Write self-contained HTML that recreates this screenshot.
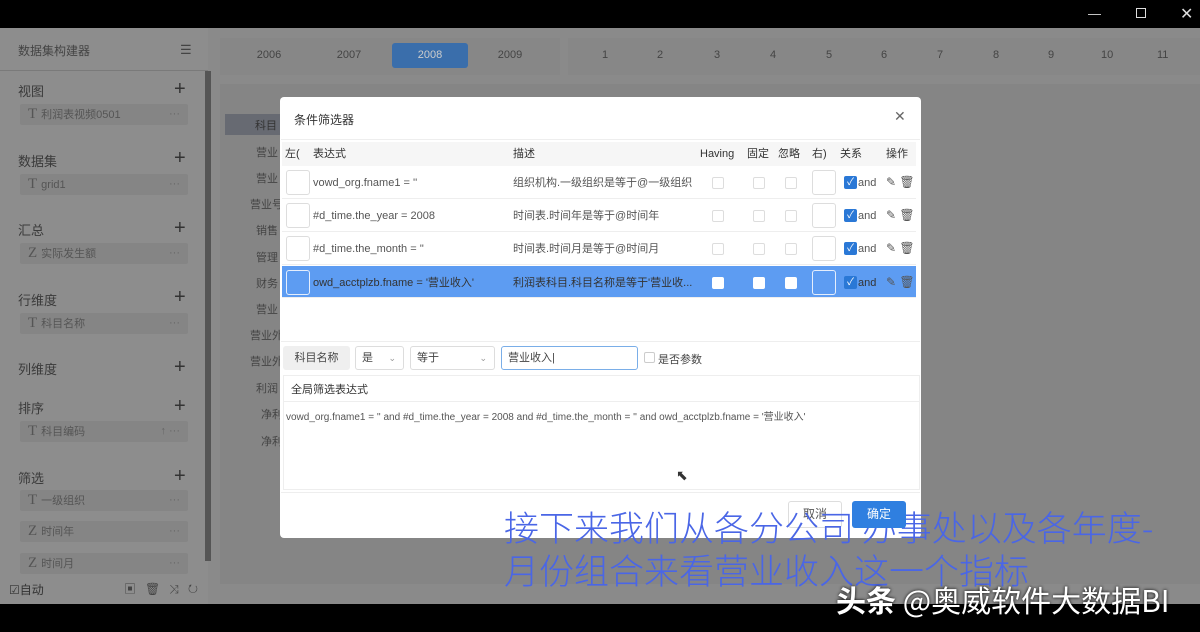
<!DOCTYPE html>
<html><head><meta charset="utf-8"><style>
*{margin:0;padding:0;box-sizing:border-box}
body{width:1200px;height:632px;overflow:hidden;background:#8a8a8a;font-family:"Liberation Sans","Noto Sans CJK SC",sans-serif;position:relative;color:#333}
.a{position:absolute}
.sec{position:absolute;left:18px;font-size:13px;color:#3a3a3a}
.plus{position:absolute;left:174px;font-size:20px;color:#333;line-height:1}
.item{position:absolute;left:20px;width:168px;height:21px;background:#858585;border-radius:2px;font-size:11px;color:#555;line-height:21px;padding-left:8px}
.item b{font-family:"Liberation Serif",serif;font-size:15px;color:#555;margin-right:4px;font-weight:normal}
.item i{position:absolute;right:8px;font-style:normal;color:#666}
.yr{position:absolute;top:43px;width:76px;height:25px;line-height:25px;text-align:center;font-size:11px;color:#444}
.mo{position:absolute;top:43px;height:25px;line-height:25px;font-size:11px;color:#444}
.th{position:absolute;top:146px;font-size:11px;color:#333;line-height:16px}
.row{position:absolute;left:282px;width:634px;height:33px;border-bottom:1px solid #eee;font-size:11px;color:#555}
.row .bx{position:absolute;top:4px;width:24px;height:25px;border:1px solid #ddd;border-radius:3px;background:#fff}
.row .cb{position:absolute;top:11px;width:12px;height:12px;border:1px solid #ddd;border-radius:2px;background:#fff}
.row .t{position:absolute;top:9px;line-height:16px}
.row .ck{position:absolute;left:562px;top:10px;width:13px;height:13px;background:#2a78d6;border-radius:2px;color:#fff;font-size:10px;line-height:13px;text-align:center}
.row .and{position:absolute;left:576px;top:9px;line-height:16px}
.row .ops{position:absolute;left:604px;top:8px;font-size:12px;color:#555;line-height:16px}
.sel{background:#5d9cf2;color:#333}
.sel .bx{background:#5d9cf2;border-color:#e5eefc}
.sel .cb{border-color:#fff}
.sub{position:absolute;left:504px;font-size:35px;font-weight:300;color:#4a66e6;font-family:"Noto Sans CJK SC",sans-serif;white-space:nowrap;line-height:42px;z-index:5}
.cl{position:absolute;font-size:11px;color:#444}
</style></head><body>
<div class="a" style="left:0;top:0;width:1200px;height:28px;background:#000"></div>
<div class="a" style="left:1088px;top:6px;color:#ddd;font-size:13px">—</div>
<div class="a" style="left:1136px;top:8px;width:10px;height:10px;border:1px solid #ddd"></div>
<div class="a" style="left:1180px;top:4px;color:#ddd;font-size:16px">✕</div>

<div class="a" style="left:0;top:28px;width:208px;height:576px;background:#8d8d8d"></div>
<div class="a" style="left:18px;top:42px;font-size:12px;color:#444">数据集构建器</div>
<div class="a" style="left:180px;top:42px;font-size:13px;color:#444">☰</div>
<div class="a" style="left:0;top:70px;width:208px;height:1px;background:#7a7a7a"></div>
<div class="a" style="left:205px;top:71px;width:6px;height:490px;background:#555"></div>
<div class="sec" style="top:81px">视图</div><div class="plus" style="top:79px">+</div>
<div class="item" style="top:104px"><b>T</b>利润表视频0501<i>···</i></div>
<div class="sec" style="top:151px">数据集</div><div class="plus" style="top:148px">+</div>
<div class="item" style="top:174px"><b>T</b>grid1<i>···</i></div>
<div class="sec" style="top:220px">汇总</div><div class="plus" style="top:218px">+</div>
<div class="item" style="top:243px"><b>Z</b>实际发生额<i>···</i></div>
<div class="sec" style="top:290px">行维度</div><div class="plus" style="top:287px">+</div>
<div class="item" style="top:313px"><b>T</b>科目名称<i>···</i></div>
<div class="sec" style="top:359px">列维度</div><div class="plus" style="top:357px">+</div>
<div class="sec" style="top:398px">排序</div><div class="plus" style="top:396px">+</div>
<div class="item" style="top:421px"><b>T</b>科目编码<i>↑ ···</i></div>
<div class="sec" style="top:468px">筛选</div><div class="plus" style="top:466px">+</div>
<div class="item" style="top:490px"><b>T</b>一级组织<i>···</i></div>
<div class="item" style="top:521px"><b>Z</b>时间年<i>···</i></div>
<div class="item" style="top:553px"><b>Z</b>时间月<i>···</i></div>
<div class="a" style="left:9px;top:581px;font-size:12px;color:#333">☑自动</div>
<div class="a" style="left:124px;top:580px;font-size:12px;color:#444;letter-spacing:9px">▣🗑⤨↻</div>

<div class="a" style="left:220px;top:38px;width:340px;height:37px;background:#878787"></div>
<div class="a" style="left:568px;top:38px;width:632px;height:37px;background:#878787"></div>
<div class="yr" style="left:231px">2006</div><div class="yr" style="left:311px">2007</div>
<div class="yr" style="left:392px;background:#3a6eab;color:#ccc;border-radius:3px">2008</div>
<div class="yr" style="left:472px">2009</div>
<div class="mo" style="left:602px">1</div><div class="mo" style="left:657px">2</div><div class="mo" style="left:714px">3</div><div class="mo" style="left:770px">4</div><div class="mo" style="left:826px">5</div><div class="mo" style="left:881px">6</div><div class="mo" style="left:937px">7</div><div class="mo" style="left:993px">8</div><div class="mo" style="left:1048px">9</div><div class="mo" style="left:1101px">10</div><div class="mo" style="left:1157px">11</div>
<div class="a" style="left:220px;top:84px;width:980px;height:500px;background:#858585"></div>
<div class="a" style="left:225px;top:114px;width:60px;height:21px;background:#676a72"></div>
<div class="cl" style="left:255px;top:117px;color:#333">科目</div>
<div class="cl" style="left:256px;top:144px">营业</div><div class="cl" style="left:256px;top:170px">营业</div><div class="cl" style="left:250px;top:196px">营业号</div><div class="cl" style="left:256px;top:222px">销售</div><div class="cl" style="left:256px;top:249px">管理</div><div class="cl" style="left:256px;top:275px">财务</div><div class="cl" style="left:256px;top:301px">营业</div><div class="cl" style="left:250px;top:327px">营业外</div><div class="cl" style="left:250px;top:353px">营业外</div><div class="cl" style="left:256px;top:380px">利润</div><div class="cl" style="left:261px;top:406px">净利</div><div class="cl" style="left:261px;top:433px">净利</div>

<div class="a" style="left:280px;top:97px;width:641px;height:441px;background:#fff;border-radius:4px"></div>
<div class="a" style="left:294px;top:111px;font-size:12px;color:#333">条件筛选器</div>
<div class="a" style="left:894px;top:108px;font-size:14px;color:#666">✕</div>
<div class="a" style="left:281px;top:139px;width:639px;height:1px;background:#eee"></div>
<div class="a" style="left:282px;top:142px;width:634px;height:24px;background:#f6f6f6"></div>
<div class="th" style="left:285px">左(</div><div class="th" style="left:313px">表达式</div><div class="th" style="left:513px">描述</div><div class="th" style="left:700px">Having</div><div class="th" style="left:747px">固定</div><div class="th" style="left:778px">忽略</div><div class="th" style="left:812px">右)</div><div class="th" style="left:840px">关系</div><div class="th" style="left:886px">操作</div>

<div class="row" style="top:166px"><div class="bx" style="left:4px"></div><div class="t" style="left:31px">vowd_org.fname1 = ''</div><div class="t" style="left:231px">组织机构.一级组织是等于@一级组织</div><div class="cb" style="left:430px"></div><div class="cb" style="left:471px"></div><div class="cb" style="left:503px"></div><div class="bx" style="left:530px"></div><div class="ck">✓</div><div class="and">and</div><div class="ops">✎ 🗑</div></div>
<div class="row" style="top:199px"><div class="bx" style="left:4px"></div><div class="t" style="left:31px">#d_time.the_year = 2008</div><div class="t" style="left:231px">时间表.时间年是等于@时间年</div><div class="cb" style="left:430px"></div><div class="cb" style="left:471px"></div><div class="cb" style="left:503px"></div><div class="bx" style="left:530px"></div><div class="ck">✓</div><div class="and">and</div><div class="ops">✎ 🗑</div></div>
<div class="row" style="top:232px"><div class="bx" style="left:4px"></div><div class="t" style="left:31px">#d_time.the_month = ''</div><div class="t" style="left:231px">时间表.时间月是等于@时间月</div><div class="cb" style="left:430px"></div><div class="cb" style="left:471px"></div><div class="cb" style="left:503px"></div><div class="bx" style="left:530px"></div><div class="ck">✓</div><div class="and">and</div><div class="ops">✎ 🗑</div></div>
<div class="row sel" style="top:266px;height:32px"><div class="bx" style="left:4px;top:4px"></div><div class="t" style="left:31px">owd_acctplzb.fname = '营业收入'</div><div class="t" style="left:231px">利润表科目.科目名称是等于'营业收...</div><div class="cb" style="left:430px"></div><div class="cb" style="left:471px"></div><div class="cb" style="left:503px"></div><div class="bx" style="left:530px;top:4px"></div><div class="ck">✓</div><div class="and">and</div><div class="ops">✎ 🗑</div></div>

<div class="a" style="left:281px;top:341px;width:639px;height:1px;background:#eee"></div>
<div class="a" style="left:283px;top:346px;width:67px;height:24px;background:#efefef;border-radius:3px;font-size:11px;color:#444;line-height:24px;text-align:center">科目名称</div>
<div class="a" style="left:355px;top:346px;width:49px;height:24px;border:1px solid #ddd;border-radius:3px;font-size:11px;color:#444;line-height:22px;padding-left:6px">是<span style="position:absolute;right:7px;color:#999;font-size:9px">⌄</span></div>
<div class="a" style="left:410px;top:346px;width:85px;height:24px;border:1px solid #ddd;border-radius:3px;font-size:11px;color:#444;line-height:22px;padding-left:6px">等于<span style="position:absolute;right:7px;color:#999;font-size:9px">⌄</span></div>
<div class="a" style="left:501px;top:346px;width:137px;height:24px;border:1px solid #7aaee8;border-radius:3px;font-size:11px;color:#444;line-height:22px;padding-left:6px">营业收入|</div>
<div class="a" style="left:644px;top:352px;width:11px;height:11px;border:1px solid #ccc;border-radius:2px"></div>
<div class="a" style="left:658px;top:351px;font-size:11px;color:#444">是否参数</div>
<div class="a" style="left:283px;top:375px;width:637px;height:115px;border:1px solid #eee"></div>
<div class="a" style="left:291px;top:381px;font-size:11px;color:#333">全局筛选表达式</div>
<div class="a" style="left:283px;top:401px;width:637px;height:1px;background:#eee"></div>
<div class="a" style="left:286px;top:408px;font-size:10px;color:#555">vowd_org.fname1 = '' and #d_time.the_year = 2008 and #d_time.the_month = '' and owd_acctplzb.fname = '营业收入'</div>
<div class="a" style="left:676px;top:467px;font-size:14px;color:#333">⬉</div>
<div class="a" style="left:281px;top:492px;width:639px;height:1px;background:#eee"></div>
<div class="a" style="left:788px;top:501px;width:54px;height:27px;border:1px solid #ddd;border-radius:3px;font-size:12px;color:#555;line-height:25px;text-align:center">取消</div>
<div class="a" style="left:852px;top:501px;width:54px;height:27px;background:#2f7fe0;border-radius:3px;font-size:12px;color:#fff;line-height:27px;text-align:center;z-index:6">确定</div>

<div class="sub" style="top:506px">接下来我们从各分公司 办事处以及各年度-</div>
<div class="sub" style="top:549px">月份组合来看营业收入这一个指标</div>

<div class="a" style="left:0;top:604px;width:1200px;height:28px;background:#000"></div>
<div class="a" style="left:836px;top:577px;font-size:30px;line-height:44px;color:#fff;font-family:'Noto Sans CJK SC',sans-serif;text-shadow:0 0 3px #000;white-space:nowrap;z-index:7"><b>头条</b> @奥威软件大数据BI</div>
</body></html>
